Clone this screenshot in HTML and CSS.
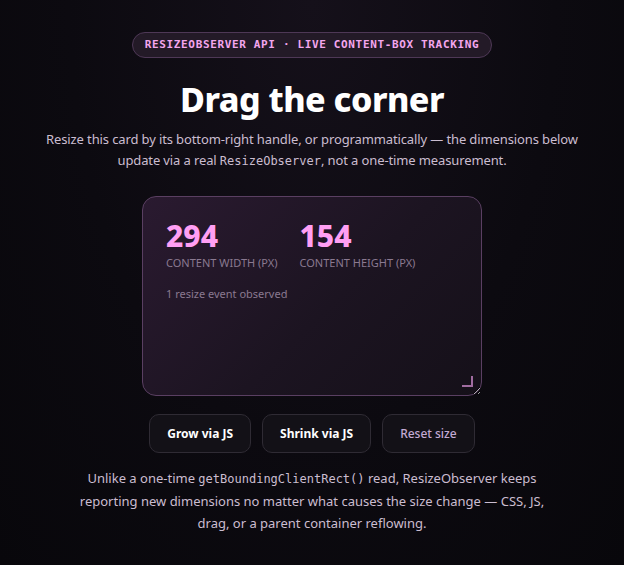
FILE: index.html
```html
<!DOCTYPE html>
<html lang="en">
<head>
<meta charset="utf-8">
<title>ResizeObserver demo</title>
<link rel="stylesheet" href="styles.css">
</head>
<body>
<main class="page">
  <div class="badge">ResizeObserver API · Live content-box tracking</div>
  <h1 class="title">Drag the corner</h1>
  <p class="lead">Resize this card by its bottom-right handle, or programmatically — the dimensions below update via a real <code>ResizeObserver</code>, not a one-time measurement.</p>
  <div class="card">
    <div class="stats">
      <div class="stat">
        <div class="stat-value">294</div>
        <div class="stat-label">Content width (px)</div>
      </div>
      <div class="stat">
        <div class="stat-value">154</div>
        <div class="stat-label">Content height (px)</div>
      </div>
    </div>
    <div class="events">1 resize event observed</div>
    <span class="corner"></span>
  </div>
  <div class="actions">
    <button class="btn">Grow via JS</button>
    <button class="btn">Shrink via JS</button>
    <button class="btn btn-muted">Reset size</button>
  </div>
  <p class="note">Unlike a one-time <code>getBoundingClientRect()</code> read, ResizeObserver keeps reporting new dimensions no matter what causes the size change — CSS, JS, drag, or a parent container reflowing.</p>
</main>
</body>
</html>
```
FILE: styles.css
```css
html, body {
  margin: 0;
  padding: 0;
}
body {
  min-height: 565px;
  background: radial-gradient(ellipse at 50% 0%, #15101a 0%, #0c0a10 55%, #08070b 100%);
  color: #f4eef6;
  font-family: "Noto Sans", "Open Sans", sans-serif;
}
.page {
  display: flex;
  flex-direction: column;
  align-items: center;
  padding: 32px 24px 24px;
}
.badge {
  font-family: "DejaVu Sans Mono", monospace;
  font-size: 11px;
  font-weight: 700;
  letter-spacing: 0.65px;
  text-transform: uppercase;
  color: #f4a6ee;
  background: #231a27;
  border: 1px solid #4e3856;
  border-radius: 999px;
  padding: 5px 12px;
  line-height: 14px;
}
.title {
  margin: 21px 0 0;
  font-size: 34px;
  font-weight: 800;
  line-height: 1.2;
  color: #ffffff;
  letter-spacing: -0.5px;
}
.lead {
  margin: 9px 0 0;
  max-width: 560px;
  text-align: center;
  font-size: 13px;
  line-height: 21px;
  letter-spacing: -0.12px;
  color: #cbbdd0;
}
code {
  font-family: "DejaVu Sans Mono", monospace;
  font-size: 12px;
  letter-spacing: 0;
}
.card {
  position: relative;
  box-sizing: border-box;
  width: 340px;
  height: 200px;
  margin-top: 24px;
  padding: 21px 23px;
  border: 1px solid #5a3f62;
  border-radius: 14px;
  background: linear-gradient(135deg, #2a1a30 0%, #1c1421 55%, #151019 100%);
  resize: both;
  overflow: auto;
}
.stats {
  display: flex;
  gap: 22px;
}
.stat-value {
  font-size: 30px;
  font-weight: 800;
  line-height: 36px;
  color: #ff9ff3;
}
.stat-label {
  margin-top: 2px;
  font-size: 11px;
  line-height: 14px;
  text-transform: uppercase;
  color: #8a7990;
}
.events {
  margin-top: 16px;
  font-size: 11px;
  line-height: 16px;
  color: #8a7990;
}
.corner {
  position: absolute;
  right: 8px;
  bottom: 8px;
  width: 9px;
  height: 9px;
  border-right: 2px solid #a06ca0;
  border-bottom: 2px solid #a06ca0;
}
.actions {
  display: flex;
  gap: 11px;
  margin-top: 18px;
}
.btn {
  font-family: "Noto Sans", "Open Sans", sans-serif;
  font-size: 12px;
  font-weight: 700;
  color: #ffffff;
  background: #131117;
  border: 1px solid #2f2b34;
  border-radius: 10px;
  padding: 0 17px;
  height: 39px;
}
.btn-muted {
  color: #c3aad4;
  font-weight: 500;
}
.note {
  margin: 14px 0 0;
  max-width: 472px;
  text-align: center;
  font-size: 13px;
  line-height: 22px;
  color: #cbbdd0;
}
```
